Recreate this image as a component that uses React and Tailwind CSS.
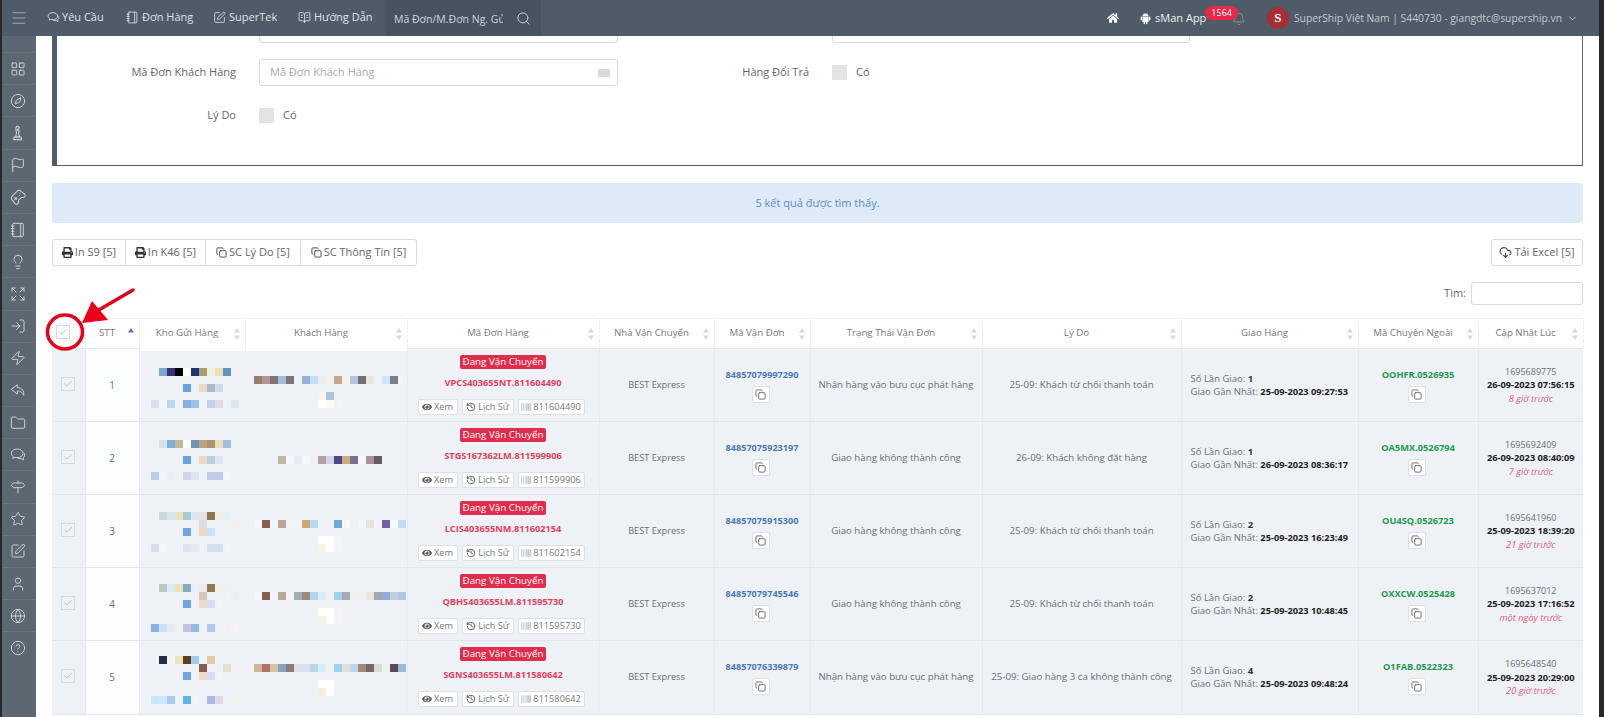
import React from 'react';
import {
  LayoutGrid, Compass, Flag, Gamepad2, Notebook, Lightbulb, Expand, LogIn, Zap, Folder,
  Signpost, Star, SquarePen, User, Globe, CircleHelp, Search, Bell, ChevronDown, Copy, CloudDownload,
  BookOpenText, Check, Menu, History,
} from 'lucide-react';
import { FaHome, FaPrint, FaEye, FaBarcode } from 'react-icons/fa';
import { AiFillAndroid } from 'react-icons/ai';

const Bubbles = ({ size = 16, strokeWidth = 1.5 }) => (
  <svg width={size} height={size} viewBox="0 0 24 24" fill="none" stroke="currentColor" strokeWidth={strokeWidth} strokeLinejoin="round">
    <path d="M11 3c-5 0-9 2.8-9 6.5 0 2 1.2 3.700 3 4.900L4 17l3.500-1.500c1.100.3 2.300.5 3.500.5 5 0 8.500-2.800 8.500-6.500S16 3 11 3z" />
    <path d="M20.500 8.500c1 1 1.500 2.200 1.500 3.500 0 1.800-1 3.300-2.500 4.300l.8 3.200-3.500-2c-2.500.5-5-.1-6.500-1.500" />
  </svg>
);

const Pawn = ({ size = 16 }) => (
  <svg width={size} height={size} viewBox="0 0 24 24" fill="none" stroke="currentColor" strokeWidth="1.7" strokeLinejoin="round">
    <path d="M11 2c2 0 3 1.500 2.500 3L11 7.500 13.500 8c-1 3.500-.5 7 1 10h-6c1.500-4 1.500-8 .5-11C8.500 4.500 9 2 11 2z" />
    <path d="M6.500 18h10l1 4h-12z" />
  </svg>
);

const Undo = ({ size = 16, strokeWidth = 1.5 }) => (
  <svg width={size} height={size} viewBox="0 0 24 24" fill="none" stroke="currentColor" strokeWidth={strokeWidth} strokeLinejoin="round">
    <path d="M11 4L2 11l9 7v-4.500c4.500 0 7.500 2 9.500 6.500 1-6.500-2.500-11.500-9.500-11.500z" />
  </svg>
);

const TiltedPad = (props) => <Gamepad2 {...props} className="-rotate-45" />;

const sideIcons = [LayoutGrid, Compass, Pawn, Flag, TiltedPad, Notebook, Lightbulb, Expand, LogIn, Zap, Undo, Folder, Bubbles, Signpost, Star, SquarePen, User, Globe, CircleHelp];

const columns = [
  { w: 'w-[33px]' },
  { w: 'w-[54px]', label: 'STT' },
  { w: 'w-[106px]', label: 'Kho Gửi Hàng', lip: true },
  { w: 'w-[162px]', label: 'Khách Hàng', lip: true },
  { w: 'w-[192px]', label: 'Mã Đơn Hàng' },
  { w: 'w-[115px]', label: 'Nhà Vận Chuyển' },
  { w: 'w-[96px]', label: 'Mã Vận Đơn' },
  { w: 'w-[172px]', label: 'Trạng Thái Vận Đơn' },
  { w: 'w-[199px]', label: 'Lý Do' },
  { w: 'w-[177px]', label: 'Giao Hàng' },
  { w: 'w-[120px]', label: 'Mã Chuyến Ngoài' },
  { w: 'w-[105px]', label: 'Cập Nhật Lúc' },
];

// pixelated (blurred out) customer data: [y, x, colours], "-" is a gap in the row
const orders = [
  {
    top: 349, code: 'VPCS403655NT.811604490', id: '811604490', tracking: '84857079997290',
    status: 'Nhận hàng vào bưu cục phát hàng', reason: '25-09: Khách từ chối thanh toán', times: 1,
    last: '25-09-2023 09:27:53', ext: 'OOHFR.0526935', stamp: '1695689775', updated: '26-09-2023 07:56:15', ago: '8 giờ trước',
    kho: [
      [368, 158, '#7ba6c9 #3d2f73 #000000 #ffffff #1b3577 #b09a6f #f0eee0 #ebe0b5 #5b93c4'],
      [384, 182, '#6aa3dc - #ead9c8 #aeb9c7 #cfd9e8'],
      [400, 150, '#d9dfec #f3f5f5 #bcd8ec - #86b0e4 #9dc0e8 - #bcd3ea #e3d9e8 - #dce7f0'],
    ],
    khach: [
      [376, 254, '#957f70 #b5928f #7d7479 #a5bcdc #7e7378 - #98b1d3 #bfe0f8 #ececec #f0f0f0 #c2a891 #f5f0ec #afc5e3 #736c70 #e8e4df - #cde6f8 #7b7d88 #f4f4f4'],
      [392, 318, '#f8f5e8 #b0c2d9'],
      [400, 318, '#ffffff #fbfaf5 #f2f3f6'],
    ],
  },
  {
    top: 422, code: 'STGS167362LM.811599906', id: '811599906', tracking: '84857075923197',
    status: 'Giao hàng không thành công', reason: '26-09: Khách không đặt hàng', times: 1,
    last: '26-09-2023 08:36:17', ext: 'OA5MX.0526794', stamp: '1695692409', updated: '26-09-2023 08:40:09', ago: '7 giờ trước',
    kho: [
      [440, 158, '#d3e4f1 #7fb0dc #c4b896 #ffffff #6f94bb #bda27d #ad9275 #ebe0b5 #9bbfe5'],
      [456, 182, '#6aa3dc - #ead9c8 #bccde0 #dfe6ef'],
      [472, 150, '#b9cdea #f3f5f7 #e8eef7 - #d6d3e8 #d8e6f2 - #c0cbe8 #b9cdea #f3f5f8 #f0f1f1'],
    ],
    khach: [
      [456, 278, '#c0b6a6 #f5f7f9 #deecfa #f5f7f9 - #b0a1a5 #cdd6e3 #51468e #c8ad79 #7e6c93 #f6f8fb #a8939a #675b61'],
    ],
  },
  {
    top: 495, code: 'LCIS403655NM.811602154', id: '811602154', tracking: '84857075915300',
    status: 'Giao hàng không thành công', reason: '25-09: Khách từ chối thanh toán', times: 2,
    last: '25-09-2023 16:23:49', ext: 'OU4SQ.0526723', stamp: '1695641960', updated: '25-09-2023 18:39:20', ago: '21 giờ trước',
    kho: [
      [512, 158, '#c9dbd8 #d3e6f4 #ebe4b5 #a5cbd9 #dbe5f3 #e6e1e2 #8d754f #eff0dc #e2f0f9'],
      [520, 198, '#dedbdb - - - #f0f0f0'],
      [528, 182, '#6ea5de - #ead9c8 #cfe0f5'],
      [544, 150, '#d3dff0 #f3f5f7 - - #e0e0ee #e2ebf3 - #d2dff0 #d2dff0 #f3f4f6'],
    ],
    khach: [
      [520, 254, '#f3f6fb #865c55 #f2f6fb #b7a699 #f2f4f9 #f2f4f9 #cfa871 #b0dcfa #f1f3f0 - #72a5d8 #fcf9f7 #f0f0f0 #f1f6fc #e7e1dc #f2f4f9 #6f62a8 #f3fcfe #c0dcf5'],
      [536, 318, '#ffffff #ffffff #f4f5f8'],
      [544, 318, '#faf3e3 #ffffff #f3f4f8'],
    ],
  },
  {
    top: 568, code: 'QBHS403655LM.811595730', id: '811595730', tracking: '84857079745546',
    status: 'Giao hàng không thành công', reason: '25-09: Khách từ chối thanh toán', times: 2,
    last: '25-09-2023 10:48:45', ext: 'OXXCW.0525428', stamp: '1695637012', updated: '25-09-2023 17:16:52', ago: 'một ngày trước',
    kho: [
      [584, 158, '#bcc9c0 #d9e9f5 #ece4b5 #82aac3 #e8edf7 #eceaea #917a52 #f0f1e3 #e9f2f9'],
      [592, 198, '#d4c6ba - - - #eeeeee'],
      [600, 182, '#6ea5de - #ecd9c6 #cfe0f5 #f1f3f7'],
      [624, 150, '#8ab2e3 #cfe1f5 #e2ebf4 - #c4c0e0 #90bbe6 - #aecbec - #f5eef3 #f3f4f6'],
    ],
    khach: [
      [592, 254, '#f3f6fb #865c55 #f2f4f9 #b7a699 #f3f5f9 #a5abb2 #9c8a7d #aed7ec #d9ecf4 - #9dd0f2 #a9aaad #f0f0f0 #f0f0f0 #ebe5e0 #a2a7b0 #90aedb #bdd0d9 #b4c5e0'],
      [608, 318, '#ffffff #ffffff #f3f4f8'],
      [616, 318, '#f6f2e3 #ffffff #f3f4f8'],
    ],
  },
  {
    top: 641, code: 'SGNS403655LM.811580642', id: '811580642', tracking: '84857076339879',
    status: 'Nhận hàng vào bưu cục phát hàng', reason: '25-09: Giao hàng 3 ca không thành công', times: 4,
    last: '25-09-2023 09:48:24', ext: 'O1FAB.0522323', stamp: '1695648540', updated: '25-09-2023 20:29:00', ago: '20 giờ trước',
    kho: [
      [656, 158, '#262c45 #f3f4f6 #ece3b8 #5b3f22 #a0ccf2 - #e3c9ac'],
      [664, 198, '#875c4e - - #e6e0d2'],
      [672, 182, '#6ea5de - #eed9c3 #cfe0f5 #f1f3f7'],
      [696, 150, '#c8e6f5 #cfe8f3 #a5cbee - #5fb1ea #f3f5f7 - #aeb6e3 #e3d3e6 - #f3f3ee'],
    ],
    khach: [
      [664, 254, '#d0b496 #a9736c #d6c29f #88a2c1 #8d7d77 #dcdfe6 #d3e2ee #b6d7e6 #d7ebf5 - #9dd0f2 #e4ddd6 #c0d3ec #a08a76 #746b64 #dadcdb #e8f2ee #5b4850 #97bbd9'],
      [680, 318, '#ffffff #ffffff'],
      [688, 318, '#f3efdc #ffffff'],
    ],
  },
];

const Mosaic = ({ rows, left, width, top }) => (
  <svg className="block" width={width} height={72} viewBox={`${left} ${top} ${width} 72`}>
    {rows.map(([y, x, colors]) =>
      colors.split(' ').map((c, i) => (c === '-' ? null : <rect key={`${y}-${i}`} x={x + i * 8} y={y} width="8" height="8" fill={c} />))
    )}
  </svg>
);

const Box = ({ small }) => (
  <span className={`inline-flex items-center justify-center w-[14px] h-[14px] border border-[#d6d9de] text-[#9aa0a8] ${small ? 'bg-[#eef1f6]' : 'bg-[#fbfbfc]'}`}>
    <Check size={10} strokeWidth={1.5} />
  </span>
);

const SortArrows = ({ active }) => (
  <svg className="absolute right-[5px] top-[9px]" width="6" height="12" viewBox="0 0 6 12">
    <path d="M3 0l3 4.500H0z" fill={active ? '#6a6acb' : '#d5d8dc'} />
    {!active && <path d="M3 12L0 7.500h6z" fill="#d5d8dc" />}
  </svg>
);

const CopyBtn = () => (
  <button className="flex items-center justify-center -ml-[3px] w-[18px] h-[17px] bg-white border border-[#dcdfe4] rounded-[2px] text-[#666]">
    <Copy size={11} />
  </button>
);

const SmallBtn = ({ className, children }) => (
  <span className={`flex items-center justify-center gap-[2px] h-[16px] bg-white border border-[#dddfe3] rounded-[2px] text-[9.2px] text-[#777] ${className}`}>
    {children}
  </span>
);

const ToolBtn = ({ icon, label, className }) => (
  <button className={`flex items-center justify-center gap-[2px] h-full text-[11px] text-[#666] ${className}`}>
    {icon}
    {label}
  </button>
);

const Field = ({ label, placeholder, labelW, inputW, icon }) => (
  <div className="flex items-center">
    <label className={`${labelW} text-right text-[11px] text-[#666]`}>{label}</label>
    <div className={`relative ml-[23px] ${inputW} h-[27px] border border-[#d5dae0] rounded-[3px] bg-white px-[10px] flex items-center text-[11px] text-[#aaa]`}>
      {placeholder}
      {icon && <span className="absolute right-[7px] top-[9px] w-[12px] h-[8px] bg-[#d9d9d9]" />}
    </div>
  </div>
);

const CheckField = ({ label, labelW }) => (
  <div className="flex items-center h-[27px]">
    <label className={`${labelW} text-right text-[11px] text-[#666]`}>{label}</label>
    <span className="ml-[23px] w-[15px] h-[15px] bg-[#e3e3e3]" />
    <span className="ml-[9px] text-[11px] text-[#666]">Có</span>
  </div>
);

export default function App() {
  return (
    <div className="relative h-[717px] pl-[2px] pr-[5px] bg-[#26282d] overflow-hidden font-['Open_Sans',sans-serif] flex flex-col">
      <header className="relative z-10 h-9 shrink-0 bg-[#4f5b68] flex items-center text-[#dfe3e7] text-[11px]">
        <Menu size={18} strokeWidth={1} className="ml-[8px] text-[#b8c0c8]" />
        <nav className="flex items-center ml-[19px] -mt-[2px]">
          <span className="flex items-center gap-[2px] w-[79px]"><Bubbles size={13} />Yêu Cầu</span>
          <span className="flex items-center gap-[3px] w-[87px]"><Notebook size={13} strokeWidth={1.5} />Đơn Hàng</span>
          <span className="flex items-center gap-[3px] w-[85px]"><SquarePen size={13} strokeWidth={1.5} />SuperTek</span>
          <span className="flex items-center gap-[3px] w-[87px]"><BookOpenText size={13} strokeWidth={1.5} />Hướng Dẫn</span>
        </nav>
        <div className="flex items-center h-full w-[156px] bg-[#485360] pl-[9px]">
          <input readOnly placeholder="Mã Đơn/M.Đơn Ng. Gửi" className="w-[109px] bg-transparent outline-none text-[10.5px] placeholder:text-[#cfd5db] pt-[3px]" />
          <Search size={15} strokeWidth={1.5} className="ml-[13px] text-[#cfd5db]" />
        </div>
        <div className="ml-auto flex items-center">
          <FaHome size={12} className="text-white" />
          <AiFillAndroid size={13} className="ml-[20px] text-white" />
          <span className="ml-[3px] text-[11px] text-[#eceff1]">sMan App</span>
          <span className="relative -top-[5px] -ml-[1px] px-[6px] h-[14px] leading-[14px] rounded-full bg-[#e8274b] text-white text-[9px]">1564</span>
          <Bell size={14} strokeWidth={1} className="-ml-[6px] mt-[2px] text-[#aab2ba]" />
          <span className="ml-[21px] w-[22px] h-[22px] rounded-full bg-[#a62f35] flex items-center justify-center text-white text-[13px] font-bold font-['Liberation_Serif',serif]">S</span>
          <span className="ml-[5px] text-[#c3cad1] text-[10.3px] pt-[1px]">SuperShip Việt Nam | S440730 - giangdtc@supership.vn</span>
          <ChevronDown size={11} className="ml-[5px] mr-[21px] text-[#c3cad1]" />
        </div>
      </header>

      <div className="flex flex-1 min-h-0">
        <aside className="w-[34px] shrink-0 bg-[#5d6772] pt-4 text-[#c9d1d8]">
          {sideIcons.map((Icon, i) => (
            <div key={i} className="h-[32.2px] flex items-center justify-center pr-[3px] border-t border-[#69737d]">
              <Icon size={16} strokeWidth={1.5} />
            </div>
          ))}
        </aside>

        <main className="flex-1 min-w-0 bg-white px-4 overflow-hidden">
          <div className="-mt-5 h-[150px] border-l-[5px] border-r border-b border-l-[#4f5b68] border-r-[#666] border-b-[#555] flex flex-col gap-4">
            <div className="flex">
              <div className="w-[561px]"><Field label="Ký Gửi Hàng" labelW="w-[179px]" inputW="w-[359px]" /></div>
              <Field label="Hàng Gửi Lẻ" placeholder="Hàng" labelW="w-[191px]" inputW="w-[358px]" />
            </div>
            <div className="flex">
              <div className="w-[561px]"><Field label="Mã Đơn Khách Hàng" placeholder="Mã Đơn Khách Hàng" labelW="w-[179px]" inputW="w-[359px]" icon /></div>
              <CheckField label="Hàng Đổi Trả" labelW="w-[191px]" />
            </div>
            <CheckField label="Lý Do" labelW="w-[179px]" />
          </div>

          <div className="mt-[17px] h-10 bg-[#deeaf8] rounded-[2px] flex items-center justify-center text-[11px] text-[#5c8ac4]">
            5 kết quả được tìm thấy.
          </div>

          <div className="mt-4 h-[27px] flex justify-between">
            <div className="flex h-full border border-[#d7dade] rounded-[3px]">
              <ToolBtn className="w-[73px] border-r border-[#d7dade]" icon={<FaPrint size={11} className="text-[#333]" />} label="In S9 [5]" />
              <ToolBtn className="w-[80px] border-r border-[#d7dade]" icon={<FaPrint size={11} className="text-[#333]" />} label="In K46 [5]" />
              <ToolBtn className="w-[95px] border-r border-[#d7dade]" icon={<Copy size={11} className="text-[#444]" />} label="SC Lý Do [5]" />
              <ToolBtn className="w-[115px]" icon={<Copy size={11} className="text-[#444]" />} label="SC Thông Tin [5]" />
            </div>
            <ToolBtn className="w-[92px] border border-[#d7dade] rounded-[3px]" icon={<CloudDownload size={13} className="text-[#444]" />} label="Tải Excel [5]" />
          </div>

          <div className="mt-4 h-[23px] flex items-center justify-end gap-[5px] text-[11px] text-[#666]">
            Tìm:
            <span className="w-[112px] h-full border border-[#d5dae0] rounded-[3px]" />
          </div>

          <table className="mt-[13px] w-[1531px] table-fixed border-collapse text-[9.7px] text-[#6b6f75]">
            <colgroup>
              {columns.map((c, i) => <col key={i} className={c.w} />)}
            </colgroup>
            <thead>
              <tr className="h-[30px] bg-white border-t border-[#f0f1f3]">
                {columns.map((c, i) => (
                  <th key={i} className={`relative p-0 pr-[10px] font-normal text-center text-[#777] border-r border-[#eef0f3] ${i === 0 ? 'bg-[#fbfbfc] pr-0' : ''}`}>
                    {i === 0 ? <Box /> : c.label}
                    {i > 0 && <SortArrows active={i === 1} />}
                    {c.lip && <span className="absolute left-0 right-0 top-full h-[3px] bg-white" />}
                  </th>
                ))}
              </tr>
            </thead>
            <tbody>
              {orders.map((o, i) => (
                <tr key={o.id} className="h-[73px] bg-[#eef1f6] border-t border-[#e2e5ea]">
                  <td className="p-0 text-center border-r border-[#e6e9ee]"><Box small /></td>
                  <td className="p-0 text-center bg-[#fcfdfe] text-[10px] border-r border-[#e6e9ee]">{i + 1}</td>
                  <td className="p-0"><Mosaic rows={o.kho} left={139} width={106} top={o.top} /></td>
                  <td className="p-0 border-r border-[#e6e9ee]"><Mosaic rows={o.khach} left={245} width={162} top={o.top} /></td>
                  <td className="p-0 align-top border-r border-[#e6e9ee]">
                    <div className="flex flex-col items-center pt-[6px]">
                      <span className="h-[14px] w-[86px] flex items-center justify-center bg-[#e12c4b] rounded-[2px] text-white text-[9.8px] whitespace-nowrap">Đang Vận Chuyển</span>
                      <span className="mt-[7px] h-[14px] leading-[14px] font-bold text-[9.2px] text-[#e2405f] whitespace-nowrap">{o.code}</span>
                      <div className="mt-[9px] flex gap-[4px] -ml-[4px]">
                        <SmallBtn className="w-[40px]"><FaEye size={10} className="text-[#555]" />Xem</SmallBtn>
                        <SmallBtn className="w-[52px]"><History size={10} className="text-[#444]" />Lịch Sử</SmallBtn>
                        <SmallBtn className="w-[67px]"><FaBarcode size={10} className="text-[#aaa]" />{o.id}</SmallBtn>
                      </div>
                    </div>
                  </td>
                  <td className="p-0 text-center text-[9.2px] border-r border-[#e6e9ee]">BEST Express</td>
                  <td className="p-0 border-r border-[#e6e9ee]">
                    <div className="flex flex-col items-center gap-[4px]">
                      <span className="h-[14px] leading-[14px] font-bold text-[9.1px] text-[#4a78b8]">{o.tracking}</span>
                      <CopyBtn />
                    </div>
                  </td>
                  <td className="p-0 text-center border-r border-[#e6e9ee]">{o.status}</td>
                  <td className="p-0 text-center border-r border-[#e6e9ee]">{o.reason}</td>
                  <td className="p-0 pl-[9px] leading-[13.5px] text-[9.5px] border-r border-[#e6e9ee]">
                    <div>Số Lần Giao: <b className="text-[#333]">{o.times}</b></div>
                    <div>Giao Gần Nhất: <b className="text-[#222] text-[9.25px]">{o.last}</b></div>
                  </td>
                  <td className="p-0 border-r border-[#e6e9ee]">
                    <div className="flex flex-col items-center gap-[4px]">
                      <span className="h-[14px] leading-[14px] font-bold text-[9.25px] text-[#1e9a4e]">{o.ext}</span>
                      <CopyBtn />
                    </div>
                  </td>
                  <td className="p-0 text-center leading-[13.5px] text-[9.25px]">
                    <div className="text-[9px]">{o.stamp}</div>
                    <div className="font-bold text-[#222]">{o.updated}</div>
                    <div className="italic text-[#e0607f]">{o.ago}</div>
                  </td>
                </tr>
              ))}
            </tbody>
          </table>
          <div className="w-[1531px] border-t border-[#e2e5ea]" />
        </main>
      </div>

      {/* red annotation on top of the page */}
      <svg className="absolute left-0 top-0 z-20 pointer-events-none" width="150" height="360" viewBox="0 0 150 360">
        <ellipse cx="65" cy="332" rx="17.500" ry="17" fill="none" stroke="#e8001a" strokeWidth="3.500" />
        <path d="M133 290L97 311" stroke="#e8001a" strokeWidth="3.500" strokeLinecap="round" />
        <path d="M82 323L92 301L108 320z" fill="#e8001a" />
      </svg>
    </div>
  );
}
